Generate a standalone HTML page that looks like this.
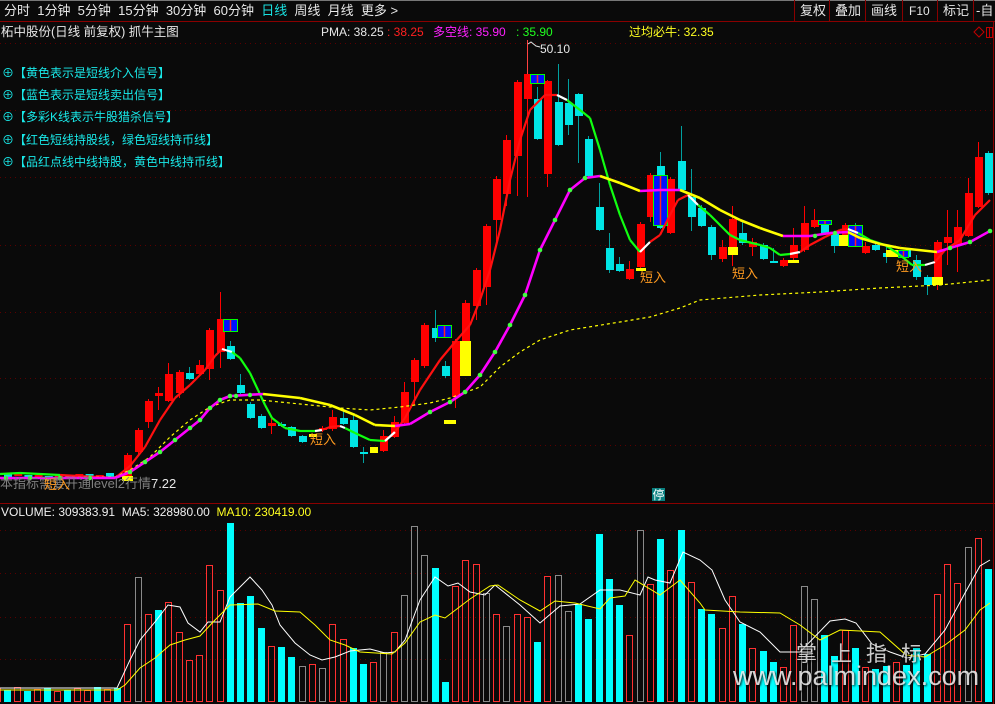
<!DOCTYPE html>
<html><head><meta charset="utf-8"><style>
html,body{margin:0;padding:0;background:#0a0a0a;}
body{width:995px;height:704px;overflow:hidden;position:relative;font-family:"Liberation Sans","Noto Sans CJK SC",sans-serif;}
.t{position:absolute;white-space:nowrap;font-size:12px;line-height:14px;}
</style></head><body>
<svg id="s" width="995" height="704" style="position:absolute;left:0;top:0" xmlns="http://www.w3.org/2000/svg"></svg>
<div class="t" style="left:4px;top:4px;color:#e8e8e8;font-size:13px;word-spacing:0">分时&nbsp; 1分钟&nbsp; 5分钟&nbsp; 15分钟&nbsp; 30分钟&nbsp; 60分钟&nbsp; <span style="color:#19e0e0">日线</span>&nbsp; 周线&nbsp; 月线&nbsp; 更多 &gt;</div>
<div class="t" style="left:800px;top:4px;color:#e8e8e8;font-size:13px">复权</div>
<div class="t" style="left:835px;top:4px;color:#e8e8e8;font-size:13px">叠加</div>
<div class="t" style="left:871px;top:4px;color:#e8e8e8;font-size:13px">画线</div>
<div class="t" style="left:909px;top:4px;color:#e8e8e8;font-size:12px">F10</div>
<div class="t" style="left:943px;top:4px;color:#e8e8e8;font-size:13px">标记</div>
<div class="t" style="left:976px;top:4px;color:#e8e8e8;font-size:13px">-自</div>
<div class="t" style="left:1px;top:25px;color:#e8e8e8;font-size:12.5px">柘中股份(日线 前复权) 抓牛主图</div>
<div class="t" style="left:321px;top:25px;color:#e8e8e8">PMA: 38.25</div>
<div class="t" style="left:387px;top:25px;color:#ff2020">: 38.25</div>
<div class="t" style="left:433px;top:25px;color:#ff20ff">多空线: 35.90</div>
<div class="t" style="left:516px;top:25px;color:#20ff20">: 35.90</div>
<div class="t" style="left:629px;top:25px;color:#ffff20">过均必牛: 32.35</div>
<div class="t" style="left:540px;top:42px;color:#e8e8e8">50.10</div>
<div class="t" style="left:2px;top:66px;color:#19e8e8">⊕【黄色表示是短线介入信号】</div>
<div class="t" style="left:2px;top:88px;color:#19e8e8">⊕【蓝色表示是短线卖出信号】</div>
<div class="t" style="left:2px;top:110px;color:#19e8e8">⊕【多彩K线表示牛股猎杀信号】</div>
<div class="t" style="left:2px;top:133px;color:#19e8e8">⊕【红色短线持股线，绿色短线持币线】</div>
<div class="t" style="left:2px;top:155px;color:#19e8e8">⊕【品红点线中线持股，黄色中线持币线】</div>
<div class="t" style="left:0px;top:477px;color:#808080;font-size:13px">本指标需要开通level2行情<span style="color:#e8e8e8">7.22</span></div>
<div class="t" style="left:44px;top:478px;color:#ff9a20;font-size:13px">短入</div>
<div class="t" style="left:310px;top:433px;color:#ff9a20;font-size:13px">短入</div>
<div class="t" style="left:640px;top:271px;color:#ff9a20;font-size:13px">短入</div>
<div class="t" style="left:732px;top:267px;color:#ff9a20;font-size:13px">短入</div>
<div class="t" style="left:896px;top:260px;color:#ff9a20;font-size:13px">短入</div>
<div class="t" style="left:652px;top:488px;width:13px;height:13px;background:#0a8080;color:#fff;font-size:12px;text-align:center">停</div>
<div class="t" style="left:1px;top:505px;color:#f0f0f0">VOLUME: 309383.91&nbsp; MA5: 328980.00&nbsp; <span style="color:#ffff20">MA10: 230419.00</span></div>
<div class="t" style="left:796px;top:643px;color:#e0e0e0;font-size:21px;line-height:24px;letter-spacing:14px;text-shadow:1px 1px 2px #000;opacity:.9">掌上指标</div>
<div class="t" style="left:733px;top:661px;color:#e8e8e8;font-size:27px;line-height:30px;text-shadow:1px 1px 2px #000;opacity:.9">www.palmindex.com</div>
<script>
var S=document.getElementById('s'),NS='http://www.w3.org/2000/svg';
function el(n,a){var e=document.createElementNS(NS,n);for(var k in a)e.setAttribute(k,a[k]);S.appendChild(e);return e;}
function R(x,y,w,h,f,st){el('rect',{x:x,y:y,width:w,height:h,fill:f||'none',stroke:st||'none','stroke-width':1});}
function L(x1,y1,x2,y2,c,w,d){var a={x1:x1,y1:y1,x2:x2,y2:y2,stroke:c,'stroke-width':w||1};if(d)a['stroke-dasharray']=d;el('line',a);}
L(0,0.5,995,0.5,'#777');L(0,21.5,995,21.5,'#8a0000');L(0,503.5,995,503.5,'#8a0000');L(993.5,22,993.5,704,'#8a0000');
[794,829,865,902,937,973].forEach(function(x){L(x+.5,0,x+.5,22,'#8a0000');});
el('path',{d:'M974 32 L979 27 L984 32 L979 37 Z',fill:'none',stroke:'#c00000'});R(986.5,27.5,6,10,'none','#c00000');L(989.5,28,989.5,37,'#c00000');
[43,110,177,245,312,378,445,530,573,617,659].forEach(function(y){L(0,y+.5,993,y+.5,'#5a0000',1,'1 4');});
var V=[[-6,688,'r'],[4,690,'c'],[14,687,'r'],[24,691,'c'],[34,689,'r'],[44,688,'c'],[54,691,'r'],[64,690,'c'],[74,688,'r'],[94,687,'c'],[84,690,'r'],[104,689,'r'],[114,688,'c'],[124,624,'r'],[135,577,'g'],[145,614,'r'],[155,610,'c'],[165,602,'r'],[176,632,'r'],[186,660,'r'],[196,655,'r'],[206,565,'r'],[217,590,'r'],[227,523,'c'],[237,603,'c'],[247,596,'c'],[258,628,'c'],[268,646,'r'],[278,647,'c'],[288,657,'c'],[299,666,'g'],[309,664,'r'],[319,668,'g'],[329,624,'r'],[340,639,'r'],[350,648,'c'],[360,664,'c'],[370,662,'r'],[380,652,'g'],[391,632,'r'],[401,595,'g'],[411,526,'g'],[421,555,'g'],[432,568,'c'],[442,682,'c'],[452,586,'r'],[462,560,'r'],[473,564,'r'],[483,593,'g'],[493,614,'r'],[503,626,'g'],[514,614,'r'],[524,617,'r'],[534,642,'c'],[544,576,'r'],[555,575,'g'],[565,611,'g'],[575,604,'c'],[585,619,'c'],[596,534,'c'],[606,579,'c'],[616,605,'c'],[626,635,'r'],[637,530,'g'],[647,584,'r'],[657,539,'c'],[667,570,'r'],[678,530,'c'],[688,582,'r'],[698,609,'c'],[708,614,'c'],[719,628,'r'],[729,596,'r'],[739,624,'c'],[749,648,'r'],[760,651,'c'],[770,662,'c'],[780,667,'r'],[790,625,'r'],[801,586,'g'],[811,599,'g'],[821,635,'c'],[831,656,'c'],[842,630,'r'],[852,648,'c'],[862,667,'r'],[872,669,'c'],[883,666,'c'],[893,662,'r'],[903,665,'c'],[913,648,'c'],[924,654,'c'],[934,594,'r'],[944,564,'r'],[954,583,'r'],[965,547,'g'],[975,538,'r'],[985,569,'c']];
V.forEach(function(v){if(v[2]=='c')R(v[0],v[1],7,702-v[1],'#00ffff');else R(v[0]+.5,v[1]+.5,6,701-v[1],'none',v[2]=='g'?'#8a8a8a':'#ff3030');});
function PL(pts,c,w,d){var a={points:pts.map(function(p){return p.join(',')}).join(' '),fill:'none',stroke:c,'stroke-width':w||1};if(d)a['stroke-dasharray']=d;el('polyline',a);}
PL([[0,688],[117,688],[130,660],[140,640],[155,622],[168,605],[180,607],[188,623],[200,632],[208,622],[220,622],[230,597],[250,577],[262,590],[272,605],[280,625],[295,643],[310,655],[322,660],[335,657],[350,651],[370,649],[385,653],[395,652],[405,640],[420,600],[435,577],[448,586],[458,583],[470,592],[485,595],[495,585],[520,605],[540,623],[560,606],[580,604],[600,590],[620,590],[640,595],[648,577],[655,580],[670,583],[683,552],[700,560],[712,570],[725,600],[740,622],[760,632],[780,652],[800,652],[830,621],[845,619],[856,623],[872,644],[890,652],[907,658],[925,654],[945,630],[965,593],[980,566],[990,560]],'#ffffff');
PL([[0,690],[117,690],[125,685],[140,668],[155,658],[170,645],[185,640],[200,636],[215,620],[230,605],[258,604],[275,611],[300,612],[315,625],[330,640],[345,645],[360,652],[392,654],[405,643],[420,622],[435,615],[445,618],[470,599],[490,586],[498,585],[520,600],[540,611],[555,601],[575,603],[600,609],[610,598],[625,596],[635,580],[660,595],[680,580],[700,603],[705,610],[740,612],[780,613],[800,625],[820,640],[840,630],[880,632],[906,655],[925,657],[945,645],[965,630],[980,610],[990,603]],'#ffff00');
var C=[['c',473,477],['r',474,476],['c',475,478],['r',475,477],['c',476,478],['r',475,477],['c',476,479],['r',474,477],['c',474,477],['r',475,478],['c',473,477],['r',475,477],
['r',455,478,453,480],['r',430,452,428,455],['r',401,422,399,428],['r',393,396,387,410],['r',374,401,363,402],['r',372,393,370,398],['c',373,379,367,380],['r',365,374,360,376],['r',330,369,328,380],['r',319,352,292,368],['c',346,359,341,360],['c',385,393,374,394],['c',404,418,402,419],['c',416,428,414,429],['r',423,426,418,434],['c',424,426,422,427],['c',427,436,426,437],['c',436,442,435,443],['y',434,437],['r',428,430,426,432],['r',417,429,410,431],['c',418,424,411,425],['c',420,447,415,448],['c',452,454,447,463],['y',447,453],['r',436,451,430,452],['r',422,437,416,438],['r',392,423,382,424],['r',360,382,358,405],['r',325,366,323,368],['c',328,338,310,342],['c',366,376,361,378],['r',341,397,339,408],['r',303,341,300,342],['r',270,306,268,320],['r',226,287,224,305],['r',179,220,176,245],['r',140,194,135,206],['r',82,156,80,196],['r',74,99,40,197],['c',99,139,87,140],['r',81,174,80,187],['c',102,145,64,146],['c',103,125,79,135],['c',94,116,93,163],['c',139,176,136,177],['c',207,230,183,231],['c',248,270,233,273],['c',264,271,257,272],['r',269,279,261,280],['r',224,267,222,268],['r',175,217,173,222],['c',166,228,152,229],['r',179,233,177,234],['c',161,190,126,191],['c',197,217,169,231],['c',208,226,205,227],['c',227,255,225,260],['r',247,259,240,262],['r',219,247,206,266],['c',233,243,220,245],['r',242,247,238,256],['c',245,259,243,260],['c',261,263,248,263],['r',260,266,258,267],['r',245,258,228,260],['r',223,250,206,252],['r',220,227,209,228],['c',224,234,222,235],['c',233,246,231,253],['r',225,235,223,236],['c',225,246,223,247],['r',246,253,242,254],['c',245,250,243,251],['c',253,257,245,263],['y',250,257],['c',250,257,248,258],['c',260,277,255,280],['c',277,285,275,295],['r',242,277,240,290],['r',237,243,210,265],['r',227,245,210,272],['r',193,236,178,237],['r',157,207,142,208],['c',153,193,151,195]];
var X=V.map(function(v){return v[0];});X.splice(9,2,84,94);
for(var i=0;i<C.length;i++){var c=C[i],x=(i<12?4+10.2*i:X[i+1]);var cx=x+3.5;
 var col=c[0]=='r'?'#ff0000':c[0]=='c'?'#00e5e5':'#ffff00';var wc=c[0]=='c'?'#00a0a0':col;
 if(c[3]!==undefined)L(cx,c[3],cx,c[4],wc,1);
 R(x,c[1],8,Math.max(c[2]-c[1],1.5),col);}
function sig(x,y,w,h){R(x+.5,y+.5,w,h,'#0010ff','#00ff00');L(x+w/2+.5,y+1,x+w/2+.5,y+h,'#ff2020',1.5);}
function yb(x,y,w,h){R(x,y,w,h,'#ffff00');}
yb(122,476,11,5);yb(460,341,11,35);yb(636,268,10,3);yb(728,247,10,8);yb(788,260,11,3);yb(839,235,11,11);yb(444,420,12,4);yb(932,277,11,8);yb(886,250,11,7);
sig(223,319,14,12);sig(437,325,14,12);sig(530,74,14,9);sig(653,175,14,50);sig(818,220,13,4);sig(848,225,14,21);sig(898,250,10,7);
L(527.5,40,527.5,74,'#ff4040');PL([[528,44],[531,42],[536,46],[540,47]],'#e0e0e0');
function seg(pts){for(var i=1;i<pts.length;i++){PL([pts[i-1].slice(0,2),pts[i].slice(0,2)],pts[i][2],2.2);}}
var r='#ff1010',g='#10ff10',w='#ffffff';
seg([[0,474],[20,473,g],[60,475,g],[115,478,r],[130,466,r],[145,447,r],[160,420,r],[175,398,r],[190,385,r],[205,370,r],[215,356,r],[222,349,r],[232,352,w],[240,358,g],[250,373,g],[258,390,g],[265,405,g],[272,418,g],[285,428,g],[300,431,g],[315,431,g],[322,430,w],[330,427,r],[340,426,r],[345,428,w],[355,433,g],[370,440,g],[385,441,g],[395,432,w],[405,418,r],[420,390,r],[440,360,r],[455,342,r],[470,325,r],[480,300,r],[490,270,r],[500,230,r],[510,180,r],[520,140,r],[530,110,r],[545,95,r],[557,95,r],[567,100,w],[580,110,g],[590,118,g],[600,150,g],[610,185,g],[620,215,g],[630,240,g],[640,252,g],[650,242,w],[660,235,r],[670,215,r],[678,200,r],[688,195,r],[698,205,w],[710,215,g],[730,235,g],[740,240,g],[760,245,g],[770,248,g],[780,255,g],[790,254,g],[800,252,w],[810,245,r],[825,237,r],[840,230,r],[848,229,r],[858,233,w],[870,240,g],[885,245,g],[900,255,g],[912,265,g],[925,265,g],[935,262,w],[945,250,r],[960,240,r],[975,215,r],[990,200,r]]);
PL([[0,478],[115,477],[130,470],[150,457],[170,437],[190,420],[210,407],[230,400],[260,400],[300,404],[340,408],[370,410],[400,407],[430,403],[450,398],[480,387],[500,367],[520,352],[540,340],[570,330],[620,322],[650,317],[680,308],[700,300],[760,295],[820,292],[880,288],[940,285],[990,280]],'#ffff00',1.2,'3 3');
var m='#ff00ff',y='#ffff00';
var MP=[[0,478],[60,478,m],[115,478,m],[130,472,m],[145,462,m],[160,452,m],[175,440,m],[190,428,m],[200,420,m],[210,408,m],[220,400,m],[230,396,m],[263,394,m],[300,398,y],[330,405,y],[355,415,y],[375,425,y],[395,426,y],[410,424,m],[430,412,m],[450,402,m],[465,392,m],[480,375,m],[495,352,m],[510,325,m],[525,295,m],[540,250,m],[555,220,m],[570,190,m],[585,178,m],[600,176,m],[620,183,y],[640,191,y],[660,190,m],[680,190,m],[700,198,y],[720,210,y],[740,220,y],[760,228,y],[783,236,y],[810,236,m],[830,233,m],[848,232,m],[860,238,y],[880,244,y],[900,248,y],[937,252,y],[950,248,m],[970,242,m],[990,231,m]];
for(var i=1;i<MP.length;i++)PL([MP[i-1].slice(0,2),MP[i].slice(0,2)],MP[i][2],2.6);
for(var i=1;i<MP.length;i++){if(MP[i][2]==m&&MP[i][1]<MP[i-1][1]-3||[0,60].indexOf(MP[i][0])>=0){el('circle',{cx:MP[i][0],cy:MP[i][1],r:2.3,fill:'#40ff40'});}}
[[6,478],[30,478],[90,478],[236,396],[250,395],[815,236],[835,233]].forEach(function(p){el('circle',{cx:p[0],cy:p[1],r:2.2,fill:'#40ff40'});});
</script>
</body></html>
